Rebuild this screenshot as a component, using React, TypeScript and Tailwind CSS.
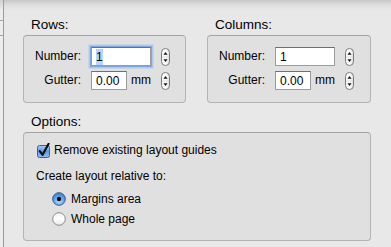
import React from 'react';

// ── Small Aqua-style controls ─────────────────────────────────────────────
function Stepper() {
  return (
    <svg width="9" height="18" viewBox="0 0 9 18" className="block">
      <defs>
        <linearGradient id="stepFill" x1="0" y1="0" x2="1" y2="0">
          <stop offset="0" stopColor="#f4f4f4" />
          <stop offset="0.5" stopColor="#ffffff" />
          <stop offset="1" stopColor="#dcdcdc" />
        </linearGradient>
      </defs>
      <rect x="0.5" y="0.5" width="8" height="17" rx="4" fill="url(#stepFill)" stroke="#7c7c7c" />
      <line x1="1.5" y1="9" x2="7.5" y2="9" stroke="#d0d0d0" strokeWidth="0.6" />
      <polygon points="2.5,6.8 6.5,6.8 4.5,4" fill="#111" />
      <polygon points="2.5,11.2 6.5,11.2 4.5,14" fill="#111" />
    </svg>
  );
}

function TextBox({ value, width, focused, selected }: { value: string; width: string; focused?: boolean; selected?: boolean }) {
  return (
    <div
      className={`h-[19px] ${width} bg-white border border-[#9c9c9c] border-t-[#6f6f6f] pl-[4px] flex items-center text-[12px] leading-[16px] text-black ${
        focused ? 'border-[#6d94c8] border-t-[#6d94c8] shadow-[0_0_0_1px_#7ea8de,0_0_0_2.5px_#adc9ee]' : ''
      }`}
    >
      <span className={selected ? 'bg-[#b4d5fe]' : ''}>{value}</span>
    </div>
  );
}

function Checkbox() {
  return (
    <svg width="15" height="15" viewBox="0 0 15 15" className="block">
      <defs>
        <linearGradient id="cbFill" x1="0" y1="0" x2="0" y2="1">
          <stop offset="0" stopColor="#a8cdf5" />
          <stop offset="0.5" stopColor="#5b9be6" />
          <stop offset="1" stopColor="#8ec0f4" />
        </linearGradient>
      </defs>
      <rect x="1.5" y="2.5" width="12" height="12" rx="2" fill="url(#cbFill)" stroke="#4a5f7c" />
      <path d="M3.8 8.2 L6.6 11.8 L12.6 0.8" fill="none" stroke="#0b0b0b" strokeWidth="2.1" strokeLinecap="round" strokeLinejoin="round" />
    </svg>
  );
}

function Radio({ on }: { on?: boolean }) {
  return (
    <svg width="14" height="14" viewBox="0 0 14 14" className="block">
      <defs>
        <radialGradient id="radOn" cx="0.5" cy="0.7" r="0.6">
          <stop offset="0" stopColor="#b6dbff" />
          <stop offset="1" stopColor="#3f86dc" />
        </radialGradient>
        <linearGradient id="radOff" x1="0" y1="0" x2="0" y2="1">
          <stop offset="0" stopColor="#f2f2f2" />
          <stop offset="0.5" stopColor="#ffffff" />
          <stop offset="1" stopColor="#e6e6e6" />
        </linearGradient>
      </defs>
      <circle cx="7" cy="7" r="6.3" fill={on ? 'url(#radOn)' : 'url(#radOff)'} stroke={on ? '#41597a' : '#8a8a8a'} />
      {on && <circle cx="7" cy="7" r="2.2" fill="#111" />}
    </svg>
  );
}

// ── Rows / Columns group ─────────────────────────────────────────────────
function SpacingGroup({ title, focused, width }: { title: string; focused?: boolean; width: string }) {
  return (
    <div className={`flex flex-col ${width}`}>
      <div className="pl-[8px] text-[13.5px] leading-[16px] text-black h-[16px]">{title}</div>
      <div className="mt-[2px] h-[68px] rounded-[4px] border border-[#b3b3b3] border-t-[#a3a3a3] bg-[#e0e0e0] pt-[11px] flex flex-col gap-[5px]">
        <div className="flex items-center h-[19px]">
          <div className="w-[57px] text-right text-[12px] leading-[19px]">Number:</div>
          <div className="ml-[10px] w-[60px]">
            <TextBox value="1" width="w-[60px]" focused={focused} selected={focused} />
          </div>
          <div className="ml-[10px]"><Stepper /></div>
        </div>
        <div className="flex items-center h-[19px]">
          <div className="w-[57px] text-right text-[12px] leading-[19px]">Gutter:</div>
          <div className="ml-[10px] w-[60px] flex items-center">
            <TextBox value="0.00" width="w-[37px]" />
            <span className="ml-[4px] text-[12px] leading-[19px]">mm</span>
          </div>
          <div className="ml-[10px]"><Stepper /></div>
        </div>
      </div>
    </div>
  );
}

export default function App() {
  return (
    <div className="w-[391px] h-[247px] overflow-hidden flex font-['Liberation_Sans',Arial,sans-serif] text-black bg-[linear-gradient(to_bottom,#c6c6c6_0px,#dedede_5px,#e7e7e7_10px,#e8e8e8_20px)]">
      {/* Edge of the window behind */}
      <div className="w-[4px] h-full flex flex-col border-r border-[#9d9d9d] bg-[linear-gradient(to_bottom,#cfcfcf_0px,#ececec_10px)]">
        <div className="h-[20px]" />
        <div className="h-px bg-[#a4a4a4]" />
        <div className="h-[14px]" />
        <div className="h-px bg-[#a4a4a4]" />
      </div>

      <div className="flex-1 pl-[19px] pt-[17px] flex flex-col">
        {/* Rows / Columns */}
        <div className="flex gap-[21px]">
          <SpacingGroup title="Rows:" focused width="w-[163px]" />
          <SpacingGroup title="Columns:" width="w-[164px]" />
        </div>

        {/* Options */}
        <div className="mt-[11px] w-[348px] flex flex-col">
          <div className="pl-[8px] text-[13.5px] leading-[16px] text-black h-[16px]">Options:</div>
          <div className="mt-[2px] h-[109px] rounded-[4px] border border-[#b3b3b3] border-t-[#a3a3a3] bg-[#e0e0e0] pt-[9px] flex flex-col text-[12px] leading-[16px]">
            <div className="flex items-center pl-[12px] h-[16px]">
              <Checkbox />
              <span className="ml-[3px]">Remove existing layout guides</span>
            </div>
            <div className="mt-[10px] pl-[12px] h-[16px]">Create layout relative to:</div>
            <div className="mt-[7px] flex items-center pl-[28px] h-[16px]">
              <Radio on />
              <span className="ml-[5px]">Margins area</span>
            </div>
            <div className="mt-[4px] flex items-center pl-[28px] h-[16px]">
              <Radio />
              <span className="ml-[5px]">Whole page</span>
            </div>
          </div>
        </div>
      </div>
    </div>
  );
}
